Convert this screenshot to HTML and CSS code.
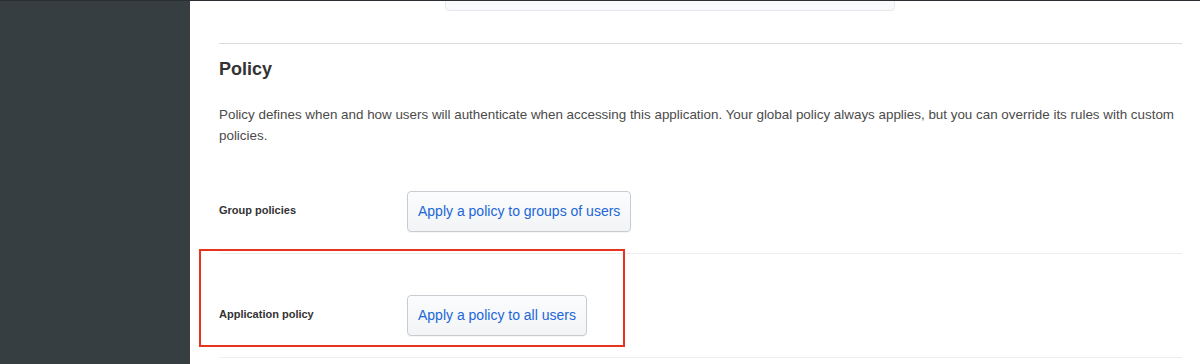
FILE: index.html
```html
<!DOCTYPE html>
<html lang="en">

<head>
    <meta charset="UTF-8">
    <meta name="viewport" content="width=device-width, initial-scale=1.0">
    <title>Application - Sign On</title>
    <link rel="stylesheet" href="styles.css">
</head>

<body>
    <div class="page">
        <aside class="sidebar"></aside>

        <main class="content">
            <div class="prev-box">
                <span>Users must verify every time they sign in, by a policy that you apply</span>
            </div>

            <section class="policy">
                <h2>Policy</h2>
                <p class="intro">Policy defines when and how users will authenticate when accessing this application. Your global policy always applies, but you can override its rules with custom policies.</p>

                <div class="policy-row">
                    <div class="row-label">Group policies</div>
                    <button class="policy-button">Apply a policy to groups of users</button>
                </div>

                <div class="policy-row">
                    <div class="row-label">Application policy</div>
                    <button class="policy-button">Apply a policy to all users</button>
                    <div class="highlight"></div>
                </div>
            </section>
        </main>
    </div>
</body>

</html>
```

FILE: styles.css
```css
body {
    font-family: 'Liberation Sans', Arial, sans-serif;
    margin: 0;
    padding: 0;
    background-color: #fff;
    overflow: hidden;
}

.page {
    display: flex;
    height: 364px;
    border-top: 1px solid #2b2f33;
    box-sizing: border-box;
}

.sidebar {
    width: 190px;
    flex-shrink: 0;
    background-color: #373e42;
}

.content {
    flex: 1;
    padding: 0 18px 0 29px;
    overflow: hidden;
}

.prev-box {
    margin: -20px 0 0 226px;
    width: 450px;
    height: 30px;
    box-sizing: border-box;
    padding: 3px 14px;
    border: 1px solid #e6e8eb;
    border-radius: 4px;
    background-color: #f9fafb;
    font-size: 13px;
    color: #666;
}

.policy {
    margin-top: 32px;
    border-top: 1px solid #dcdcdc;
    padding-top: 14px;
}

h2 {
    margin: 0;
    font-size: 18px;
    line-height: 22px;
    color: #333;
}

.intro {
    margin: 24px 0 4px;
    font-size: 13.4px;
    line-height: 21px;
    color: #4b4b4b;
}

.policy-row {
    position: relative;
    display: flex;
    align-items: center;
    padding: 41px 0 21px;
    border-bottom: 1px solid #eeeeee;
}

.row-label {
    width: 188px;
    flex-shrink: 0;
    margin-bottom: 4px;
    font-size: 11px;
    font-weight: bold;
    color: #333;
}

.policy-button {
    font-family: inherit;
    font-size: 14px;
    line-height: 17px;
    padding: 11px 10px;
    color: #2166d6;
    background: linear-gradient(#fbfcfd, #f2f4f6);
    border: 1px solid #c8ccd1;
    border-radius: 4px;
    box-shadow: 0 1px 0 rgba(0, 0, 0, 0.04);
    cursor: pointer;
}

    .policy-button:hover {
        background: #eef1f4;
    }

.highlight {
    position: absolute;
    left: -20px;
    top: -5px;
    width: 426px;
    height: 98px;
    box-sizing: border-box;
    border: 2px solid #e8341c;
}
```
